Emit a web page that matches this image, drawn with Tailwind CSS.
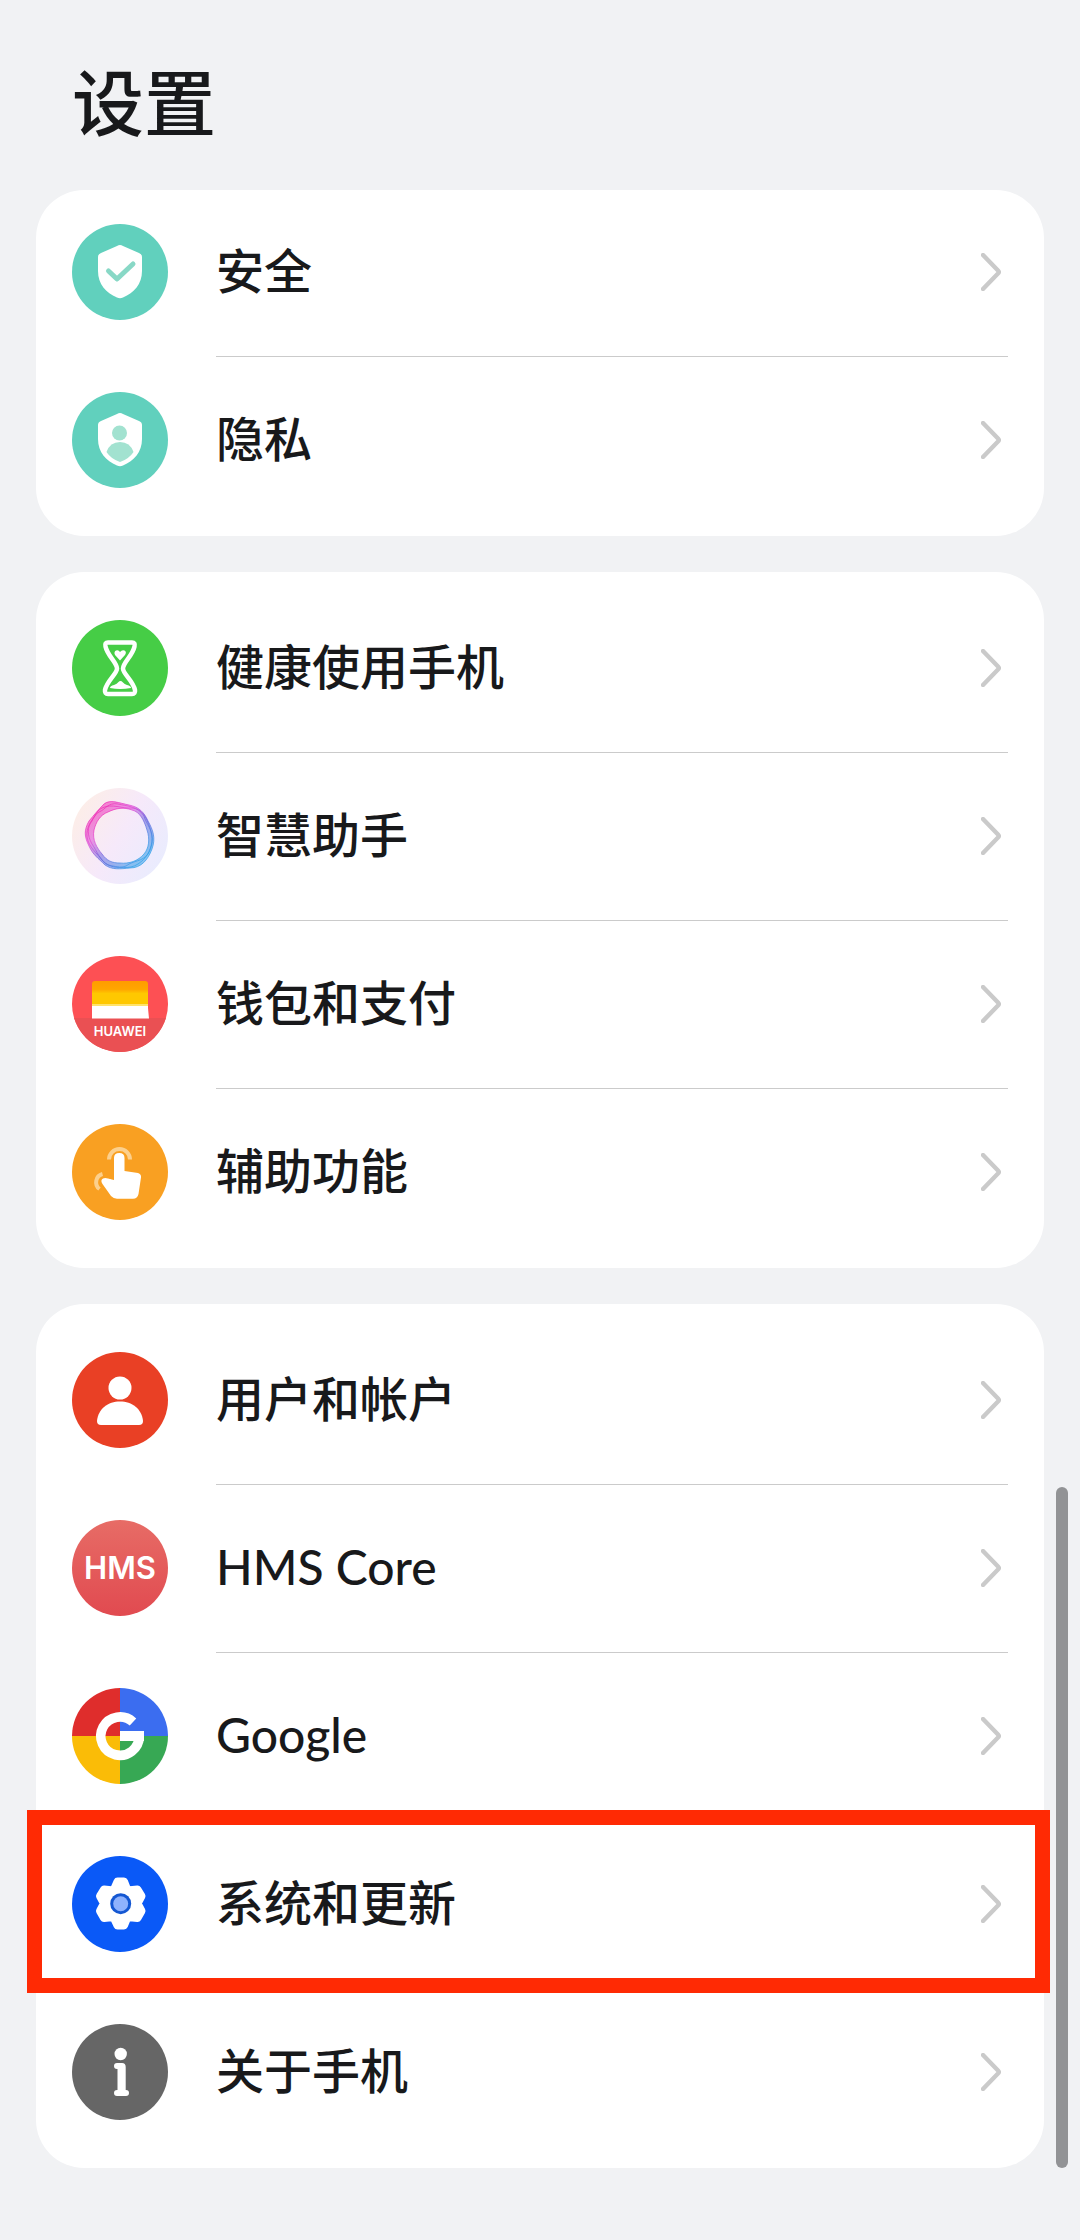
<!DOCTYPE html>
<html lang="zh-CN">

<head>
  <meta charset="UTF-8">
  <meta name="viewport" content="width=device-width, initial-scale=1.0">
  <title>设置</title>
  <script src="https://cdn.jsdelivr.net/npm/@tailwindcss/browser@4"></script>
</head>

<body class="bg-[#f1f2f4] text-[#18191b] font-['Lato','Noto_Sans_CJK_SC',sans-serif]">
  <!-- shared shapes -->
  <svg class="hidden">
    <symbol id="chevron" viewBox="0 0 20 38">
      <path d="M2 2 L17 17.500 Q18.500 19 17 20.500 L2 36" fill="none" stroke="#cacaca" stroke-width="4.400" stroke-linecap="round" />
    </symbol>
    <symbol id="shield" viewBox="0 0 96 96">
      <path d="M48 21 Q49.500 21 51 22 L67 29 Q70 30 70 33 V47 C70 60 62 69 51 73.500 Q48 75 45 73.500 C34 69 26 60 26 47 V33 Q26 30 29 29 L45 22 Q46.500 21 48 21Z" fill="#fff" />
    </symbol>
  </svg>

  <div class="relative min-h-screen px-9 pb-18">
    <header class="flex h-[190px] items-center px-9 pt-3.5">
      <h1 class="text-[72px] leading-[100px] font-medium">设置</h1>
    </header>

    <main class="flex flex-col gap-9">
      <ul class="rounded-[48px] bg-white pb-3">
        <li class="-mt-0.5">
          <a href="#security" class="flex h-42 items-center gap-12 px-9">
            <svg class="size-24 shrink-0" viewBox="0 0 96 96">
              <circle cx="48" cy="48" r="48" fill="#61d0bd" />
              <use href="#shield" />
              <path d="M36.500 47 L45 55 L61 40" fill="none" stroke="#88d8c6" stroke-width="5" stroke-linecap="round" stroke-linejoin="round" />
            </svg>
            <span class="flex h-full flex-1 items-center justify-between pr-[7px]">
              <span class="pb-0.5 text-[48px] leading-[72px] font-medium">安全</span>
              <svg class="h-[38px] w-5"><use href="#chevron" /></svg>
            </span>
          </a>
        </li>
        <li>
          <a href="#privacy" class="flex h-42 items-center gap-12 px-9">
            <svg class="size-24 shrink-0" viewBox="0 0 96 96">
              <circle cx="48" cy="48" r="48" fill="#61d0bd" />
              <use href="#shield" />
              <circle cx="47.500" cy="41" r="7.500" fill="#a2e2d0" />
              <path d="M34.500 60 Q38 50 48 50 Q58 50 61.500 60 Q57 67 48 70 Q39 67 34.500 60Z" fill="#a2e2d0" />
            </svg>
            <span class="flex h-full flex-1 items-center justify-between border-t border-[#cbcbcb] pr-[7px] pb-px">
              <span class="pb-0.5 text-[48px] leading-[72px] font-medium">隐私</span>
              <svg class="h-[38px] w-5"><use href="#chevron" /></svg>
            </span>
          </a>
        </li>
      </ul>

      <ul class="rounded-[48px] bg-white py-3">
        <li>
          <a href="#balance" class="flex h-42 items-center gap-12 px-9">
            <svg class="size-24 shrink-0" viewBox="0 0 96 96">
              <circle cx="48" cy="48" r="48" fill="#46cd46" />
              <path d="M36 22.500 H60 Q63.500 22.500 62.500 26.500 C60.500 36 51 42.500 51 48.500 C51 54 61 60.500 63 70 Q63.500 74 60 74 H36 Q32.500 74 33 70 C35 60.500 45 54 45 48.500 C45 42.500 35.500 36 33.500 26.500 Q32.500 22.500 36 22.500Z" fill="none" stroke="#fff" stroke-width="4.500" />
              <path d="M48 40.500 L43 35 Q41.500 32 44 30.500 Q46.500 29.500 48 32 Q50 29.500 52.500 30.500 Q55 32 53 35Z" fill="#fff" />
              <path d="M38 68 Q38 66 42 65 Q45 64 46.500 62 Q48.500 60 51 62.500 Q52.500 64 55 65 Q59 66 59 68 Q48 70 38 68Z" fill="#fff" />
            </svg>
            <span class="flex h-full flex-1 items-center justify-between pr-[7px]">
              <span class="pb-0.5 text-[48px] leading-[72px] font-medium">健康使用手机</span>
              <svg class="h-[38px] w-5"><use href="#chevron" /></svg>
            </span>
          </a>
        </li>
        <li>
          <a href="#assistant" class="flex h-42 items-center gap-12 px-9">
            <svg class="size-24 shrink-0" viewBox="0 0 96 96">
              <defs>
                <linearGradient id="halo" x1="0" y1="0.200" x2="1" y2="0.800">
                  <stop offset="0" stop-color="#fdeee6" />
                  <stop offset="0.500" stop-color="#f6e9fa" />
                  <stop offset="1" stop-color="#e8ecfe" />
                </linearGradient>
                <linearGradient id="ring" x1="0.200" y1="0.100" x2="0.850" y2="0.850">
                  <stop offset="0" stop-color="#ee2bb4" />
                  <stop offset="0.300" stop-color="#dd4ad6" />
                  <stop offset="0.550" stop-color="#6e62dd" />
                  <stop offset="1" stop-color="#2f9fe8" />
                </linearGradient>
              </defs>
              <circle cx="48" cy="48" r="48" fill="url(#halo)" />
              <path fill="url(#ring)" fill-opacity="0.550" fill-rule="evenodd" d="M32 16 C38 11 47 15 57 17 C67 19 72 24 76 33 C81 42 84 50 80 61 C76 72 69 80 58 80 C48 81 40 82 33 77 C26 70 21 67 17 58 C12 48 12 42 17 33 C22 27 26 22 32 16Z M36 24 C28 27 24 34 22 42 C20 52 25 60 30 66 C35 73 40 75 48 75 C57 76 66 73 72 66 C77 60 78 51 75 42 C72 32 68 24 60 22 C52 19 44 20 36 24Z" />
              <g fill="none" stroke="url(#ring)" stroke-width="1" stroke-opacity="0.700">
                <path d="M32 16 C38 11 47 15 57 17 C67 19 72 24 76 33 C81 42 84 50 80 61 C76 72 69 80 58 80 C48 81 40 82 33 77 C26 70 21 67 17 58 C12 48 12 42 17 33 C22 27 26 22 32 16Z" />
                <path d="M36 24 C28 27 24 34 22 42 C20 52 25 60 30 66 C35 73 40 75 48 75 C57 76 66 73 72 66 C77 60 78 51 75 42 C72 32 68 24 60 22 C52 19 44 20 36 24Z" />
                <path d="M30 20 C40 15 50 21 60 20 C70 21 74 28 78 40 C81 50 81 58 76 66 C70 74 62 72 54 78 C46 81 37 79 31 73 C25 65 17 60 15 49 C14 40 19 33 23 28 C25 24 26 22 30 20Z" />
                <path d="M27 24 C33 22 36 14 46 16 C54 18 66 18 72 28 C74 36 82 43 80 54 C78 63 75 70 66 76 C57 82 46 79 36 77 C28 73 25 63 20 56 C15 47 15 39 20 33 C22 29 23 26 27 24Z" />
              </g>
            </svg>
            <span class="flex h-full flex-1 items-center justify-between border-t border-[#cbcbcb] pr-[7px] pb-px">
              <span class="pb-0.5 text-[48px] leading-[72px] font-medium">智慧助手</span>
              <svg class="h-[38px] w-5"><use href="#chevron" /></svg>
            </span>
          </a>
        </li>
        <li>
          <a href="#wallet" class="flex h-42 items-center gap-12 px-9">
            <svg class="size-24 shrink-0" viewBox="0 0 96 96">
              <defs>
                <clipPath id="disc"><circle cx="48" cy="48" r="48" /></clipPath>
                <clipPath id="card"><path d="M20 62.500 V28 Q20 25 23 25 H73 Q76 25 76 28 V52 L77 62.500Z" /></clipPath>
                <linearGradient id="orange" x1="0" y1="0" x2="0" y2="1">
                  <stop offset="0" stop-color="#ff9c00" />
                  <stop offset="0.700" stop-color="#ffa600" />
                  <stop offset="1" stop-color="#ffc400" />
                </linearGradient>
              </defs>
              <g clip-path="url(#disc)">
                <rect width="96" height="96" fill="#fd5054" />
                <rect y="62" width="96" height="34" fill="#ea5053" />
              </g>
              <g clip-path="url(#card)">
                <rect x="20" y="25" width="57" height="12" fill="url(#orange)" />
                <rect x="20" y="37" width="57" height="13" fill="#ffc800" />
                <rect x="20" y="48" width="57" height="2" fill="#ffe36a" />
                <rect x="20" y="50" width="57" height="13" fill="#fff" />
              </g>
              <text x="48" y="80" text-anchor="middle" font-family="Inter, sans-serif" font-size="13" font-weight="600" fill="#fff">HUAWEI</text>
            </svg>
            <span class="flex h-full flex-1 items-center justify-between border-t border-[#cbcbcb] pr-[7px] pb-px">
              <span class="pb-0.5 text-[48px] leading-[72px] font-medium">钱包和支付</span>
              <svg class="h-[38px] w-5"><use href="#chevron" /></svg>
            </span>
          </a>
        </li>
        <li>
          <a href="#accessibility" class="flex h-42 items-center gap-12 px-9">
            <svg class="size-24 shrink-0" viewBox="0 0 96 96">
              <circle cx="48" cy="48" r="48" fill="#f9a022" />
              <path d="M37 35.500 A10.500 10.500 0 1 1 58 35.500" fill="none" stroke="#fcd08d" stroke-width="4" />
              <path d="M30.500 50 A8.500 8.500 0 0 0 27.500 65" fill="none" stroke="#fcd08d" stroke-width="4" />
              <path d="M42 34 Q42 29 47.300 29 Q52.500 29 52.500 34 V47 L66 49 Q69.500 50 69 53.500 L66.500 70 Q65.500 74.700 61 74.700 H45 Q41.500 74.700 39 72 L30.500 60 Q28 56 31 54.500 Q33 53.500 36 54.500 L42 56Z" fill="#fff" />
            </svg>
            <span class="flex h-full flex-1 items-center justify-between border-t border-[#cbcbcb] pr-[7px] pb-px">
              <span class="pb-0.5 text-[48px] leading-[72px] font-medium">辅助功能</span>
              <svg class="h-[38px] w-5"><use href="#chevron" /></svg>
            </span>
          </a>
        </li>
      </ul>

      <ul class="rounded-[48px] bg-white py-3">
        <li>
          <a href="#accounts" class="flex h-42 items-center gap-12 px-9">
            <svg class="size-24 shrink-0" viewBox="0 0 96 96">
              <circle cx="48" cy="48" r="48" fill="#e94025" />
              <circle cx="48" cy="36" r="11.500" fill="#fff" />
              <path d="M25 69 C26 57 36 49.500 48 49.500 C60 49.500 70 57 71 69 Q71 73 67 73 H29 Q25 73 25 69Z" fill="#fff" />
            </svg>
            <span class="flex h-full flex-1 items-center justify-between pr-[7px]">
              <span class="pb-0.5 text-[48px] leading-[72px] font-medium">用户和帐户</span>
              <svg class="h-[38px] w-5"><use href="#chevron" /></svg>
            </span>
          </a>
        </li>
        <li>
          <a href="#hms" class="flex h-42 items-center gap-12 px-9">
            <svg class="size-24 shrink-0" viewBox="0 0 96 96">
              <defs>
                <linearGradient id="hmsbg" x1="0" y1="0" x2="0" y2="1">
                  <stop offset="0" stop-color="#e76c66" />
                  <stop offset="1" stop-color="#e14a50" />
                </linearGradient>
              </defs>
              <circle cx="48" cy="48" r="48" fill="url(#hmsbg)" />
              <text x="48" y="59" text-anchor="middle" font-family="Inter, sans-serif" font-size="31" font-weight="600" fill="#fff">HMS</text>
            </svg>
            <span class="flex h-full flex-1 items-center justify-between border-t border-[#cbcbcb] pr-[7px] pb-px">
              <span class="pb-0.5 text-[48px] leading-[72px] font-medium">HMS Core</span>
              <svg class="h-[38px] w-5"><use href="#chevron" /></svg>
            </span>
          </a>
        </li>
        <li>
          <a href="#google" class="flex h-42 items-center gap-12 px-9">
            <svg class="size-24 shrink-0" viewBox="0 0 96 96">
              <path d="M48 48 V0 A48 48 0 0 0 0 48Z" fill="#df2d2c" />
              <path d="M48 48 H96 A48 48 0 0 0 48 0Z" fill="#3b6df0" />
              <path d="M48 48 H0 A48 48 0 0 0 48 96Z" fill="#fabc07" />
              <path d="M48 48 V96 A48 48 0 0 0 96 48Z" fill="#37a854" />
              <path d="M61 34 A19.200 19.200 0 1 0 67.200 48" fill="none" stroke="#fff" stroke-width="9.600" />
              <rect x="48" y="43" width="24" height="10" fill="#fff" />
            </svg>
            <span class="flex h-full flex-1 items-center justify-between border-t border-[#cbcbcb] pr-[7px] pb-px">
              <span class="pb-0.5 text-[48px] leading-[72px] font-medium">Google</span>
              <svg class="h-[38px] w-5"><use href="#chevron" /></svg>
            </span>
          </a>
        </li>
        <li class="relative">
          <a href="#system" class="flex h-42 items-center gap-12 px-9">
            <svg class="size-24 shrink-0" viewBox="0 0 96 96">
              <circle cx="48" cy="48" r="48" fill="#0a59f7" />
              <path d="M45.500 25.500 H52 L55.500 34.500 L65.500 33.500 L69.500 40 L65.500 47.500 L69.500 55 L65.500 62 L55.500 61 L52 69.500 H45.500 L41.500 61 L32 62 L28 55 L32 47.500 L28 40 L32 33.500 L41.500 34.500Z" fill="#fff" stroke="#fff" stroke-width="8" stroke-linejoin="round" />
              <circle cx="48.700" cy="47.700" r="10.500" fill="#1457d2" />
              <circle cx="48.700" cy="47.700" r="7.500" fill="#8fb2fd" />
            </svg>
            <span class="flex h-full flex-1 items-center justify-between border-t border-[#cbcbcb] pr-[7px] pb-px">
              <span class="pb-0.5 text-[48px] leading-[72px] font-medium">系统和更新</span>
              <svg class="h-[38px] w-5"><use href="#chevron" /></svg>
            </span>
          </a>
          <!-- highlight frame -->
          <div class="pointer-events-none absolute -top-[10px] -right-[6px] -bottom-[5px] -left-[9px] z-10 border-15 border-[#ff2a04]"></div>
        </li>
        <li>
          <a href="#about" class="flex h-42 items-center gap-12 px-9">
            <svg class="size-24 shrink-0" viewBox="0 0 96 96">
              <circle cx="48" cy="48" r="48" fill="#666" />
              <circle cx="48.700" cy="30" r="6.200" fill="#fff" />
              <path d="M45 39 H50 Q53.700 39 53.700 43 V66 H54 Q57 66 57 69 Q57 72 54 72 H45 Q42 72 42 69 Q42 66 45 66 H45.500 V45 H45 Q42 45 42 42 Q42 39 45 39Z" fill="#fff" />
            </svg>
            <span class="flex h-full flex-1 items-center justify-between border-t border-[#cbcbcb] pr-[7px] pb-px">
              <span class="pb-0.5 text-[48px] leading-[72px] font-medium">关于手机</span>
              <svg class="h-[38px] w-5"><use href="#chevron" /></svg>
            </span>
          </a>
        </li>
      </ul>
    </main>

    <!-- scroll thumb -->
    <div class="absolute right-3 bottom-18 h-[681px] w-3 rounded-full bg-[#929395]"></div>
  </div>
</body>

</html>
